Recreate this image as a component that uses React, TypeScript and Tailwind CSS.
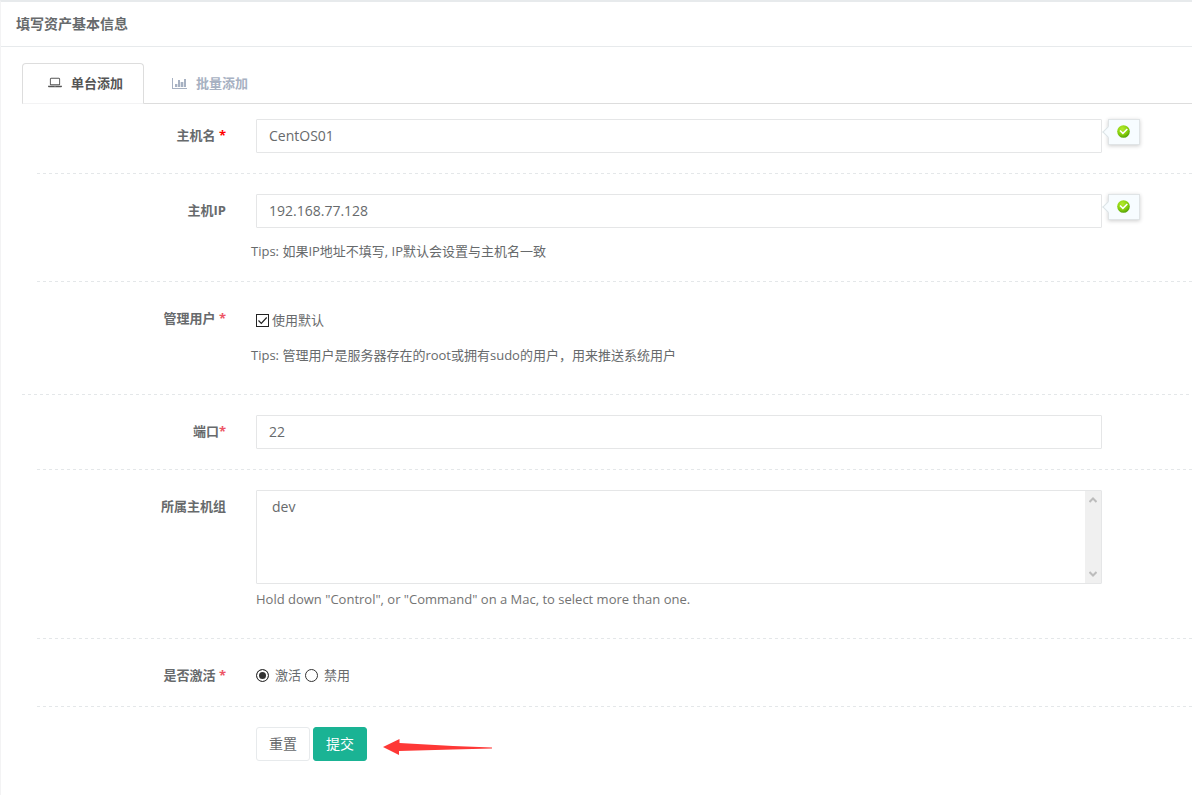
import { useState } from 'react';
import type { FormEvent, ReactNode } from 'react';
import clsx from 'clsx';

// ── Icons ────────────────────────────────────────────────────────────────────

function LaptopIcon() {
    return (
        <svg viewBox="0 0 1920 1792" className="h-[13px] w-[14px]" fill="currentColor" aria-hidden="true">
            <path d="M416 1280q-66 0-113-47t-47-113V416q0-66 47-113t113-47h1088q66 0 113 47t47 113v704q0 66-47 113t-113 47H416zm-32-864v704q0 13 9.500 22.500t22.500 9.500h1088q13 0 22.500-9.500t9.500-22.500V416q0-13-9.500-22.500T1504 384H416q-13 0-22.500 9.500T384 416zm1376 928h160v96q0 40-47 68t-113 28H160q-66 0-113-28t-47-68v-96h1760zm-720 96q16 0 16-16t-16-16H880q-16 0-16 16t16 16h160z" />
        </svg>
    );
}

function BarChartIcon() {
    return (
        <svg viewBox="0 0 15 13" className="h-[13px] w-[15px]" fill="currentColor" aria-hidden="true">
            <path d="M0 1h1v10h14v1H0z" />
            <path d="M3 7h2v3H3zM6 3h2v7H6zM9 5h2v5H9zM12 2h2v8h-2z" />
            <path d="M5 7h1v3H5zM8 5h1v5H8zM11 5h1v5h-1z" opacity="0.35" />
        </svg>
    );
}

function OkIcon() {
    return (
        <svg viewBox="0 0 13 13" className="size-[13px]" aria-hidden="true">
            <defs>
                <radialGradient id="ok-fill" cx="0.4" cy="0.3" r="0.75">
                    <stop offset="0" stopColor="#b4ea2c" />
                    <stop offset="0.6" stopColor="#86cf0c" />
                    <stop offset="1" stopColor="#4c9a06" />
                </radialGradient>
            </defs>
            <circle cx="6.500" cy="6.500" r="6.300" fill="url(#ok-fill)" />
            <path d="M3 5.500 5.900 8.400 10.300 4" fill="none" stroke="#fff" strokeWidth="1.500" />
        </svg>
    );
}

function Arrow() {
    return (
        <svg viewBox="0 0 110 18" className="h-[18px] w-[110px]" aria-hidden="true">
            <path d="M0 9 16.500 1V5L70 8 109 9.500V10.500L70 11.500 16 13V17Z" fill="#fe3836" />
        </svg>
    );
}

// ── Form parts ───────────────────────────────────────────────────────────────

const CONTROL = 'block w-full rounded-[1px] border border-[#e5e6e7] bg-white px-3 text-sm text-[#676a6c] outline-none focus:border-[#1ab394]';
const TEXT_INPUT = clsx(CONTROL, 'h-[34px] pb-[2px]');

function Required({ strong = false }: { strong?: boolean }) {
    return <span className={strong ? 'text-[#ff0000]' : 'text-[#ed5565]'}>*</span>;
}

interface RowProps {
    label: ReactNode;
    htmlFor?: string;
    id?: string;
    children: ReactNode;
}

function Row({ label, htmlFor, id, children }: RowProps) {
    const labelClass = 'w-[204px] shrink-0 pt-[6px] text-right font-bold leading-5';
    return (
        <div className="flex gap-[30px] pr-[90px]">
            {htmlFor
                ? <label htmlFor={htmlFor} className={labelClass}>{label}</label>
                : <span id={id} className={labelClass}>{label}</span>}
            <div className="relative min-w-0 flex-1">{children}</div>
        </div>
    );
}

function Divider({ wide = false }: { wide?: boolean }) {
    return (
        <hr className={clsx(
            'my-5 h-px border-0 bg-[repeating-linear-gradient(90deg,#e4e7e9_0_3px,transparent_3px_6px)]',
            !wide && 'ml-[15px]',
        )} />
    );
}

function ValidMark() {
    return (
        <span className="absolute top-0 left-full ml-[6px] flex h-[26px] w-8 justify-center border border-[#e0e4e6] bg-[#f7fcff] pt-[5px] pr-[2px] shadow-[0_1px_4px_rgba(0,0,0,0.2)]">
            <span className="absolute top-2 -left-[5px] size-2 rotate-45 border-b border-l border-[#dce3e6] bg-[#f7fcff]" />
            <OkIcon />
        </span>
    );
}

function GroupSelect() {
    return (
        <div className="relative">
            <select id="groups" multiple size={4} className={clsx(CONTROL, 'h-[94px] overflow-hidden py-[6px]')}>
                <option value="dev" className="px-[3px] py-0 leading-5">dev</option>
            </select>
            <span className="absolute inset-y-px right-px flex w-4 flex-col items-center justify-between bg-[#f0f0f0] py-[6px] pr-px text-[#bcbcbc]">
                <svg viewBox="0 0 8 6" className="h-[6px] w-2" aria-hidden="true">
                    <path d="M0.500 5 4 1.500 7.500 5" fill="none" stroke="currentColor" strokeWidth="2" />
                </svg>
                <svg viewBox="0 0 8 6" className="h-[6px] w-2" aria-hidden="true">
                    <path d="M0.500 1 4 4.500 7.500 1" fill="none" stroke="currentColor" strokeWidth="2" />
                </svg>
            </span>
        </div>
    );
}

interface RadioProps {
    label: string;
    checked: boolean;
    onChange: () => void;
}

function Radio({ label, checked, onChange }: RadioProps) {
    return (
        <label className="flex items-center gap-[6px]">
            <input
                type="radio" name="active" checked={checked} onChange={onChange}
                className="mt-px size-[13px] appearance-none rounded-full border border-[#333] bg-white checked:bg-[#333] checked:shadow-[inset_0_0_0_2px_#fff]"
            />
            {label}
        </label>
    );
}

// ── Page ─────────────────────────────────────────────────────────────────────

export default function App() {
    const [hostname, setHostname] = useState('CentOS01');
    const [ip, setIp] = useState('192.168.77.128');
    const [port, setPort] = useState('22');
    const [useDefault, setUseDefault] = useState(true);
    const [active, setActive] = useState(true);

    function handleSubmit(e: FormEvent) {
        e.preventDefault();
    }

    function handleReset() {
        setHostname('');
        setIp('');
        setPort('22');
        setUseDefault(true);
        setActive(true);
    }

    return (
        <main className="min-h-screen border-t-2 border-l border-t-[#e7eaec] border-l-[#f3f3f4] bg-white font-['Open_Sans','Noto_Sans_CJK_SC',sans-serif] text-[13px] leading-5 text-[#676a6c]">
            <header className="border-b border-[#e7eaec] px-[15px] py-3">
                <h1 className="text-sm leading-5 font-semibold">填写资产基本信息</h1>
            </header>

            <div className="pt-4 pb-8 pl-[21px]">
                <nav className="flex border-b border-[#ddd] font-semibold" role="tablist">
                    <button type="button" role="tab" aria-selected="true"
                        className="-mb-px flex h-[41px] items-center gap-[9px] rounded-t border border-[#ddd] border-b-[#f3f3f4] bg-white pr-5 pb-[2px] pl-[25px] text-[#555]">
                        <LaptopIcon />
                        单台添加
                    </button>
                    <button type="button" role="tab" aria-selected="false"
                        className="flex h-10 items-center gap-[9px] px-7 text-[#a7b1c2]">
                        <BarChartIcon />
                        批量添加
                    </button>
                </nav>

                <form className="pt-[15px]" onSubmit={handleSubmit}>
                    <Row htmlFor="hostname" label={<>主机名 <Required strong /></>}>
                        <input id="hostname" type="text" className={TEXT_INPUT}
                            value={hostname} onChange={e => setHostname(e.target.value)} />
                        {hostname && <ValidMark />}
                    </Row>
                    <Divider />

                    <Row htmlFor="ip" label="主机IP">
                        <input id="ip" type="text" className={TEXT_INPUT}
                            value={ip} onChange={e => setIp(e.target.value)} />
                        {ip && <ValidMark />}
                        <p className="-ml-[5px] pt-[13px]">Tips: 如果IP地址不填写, IP默认会设置与主机名一致</p>
                    </Row>
                    <Divider />

                    <Row id="admin-label" label={<>管理用户 <Required /></>}>
                        <label className="flex items-center gap-[3px] pt-2">
                            <input type="checkbox" checked={useDefault} aria-describedby="admin-label"
                                onChange={e => setUseDefault(e.target.checked)}
                                className="peer size-[13px] appearance-none border border-[#222] bg-white" />
                            <svg viewBox="0 0 13 13" className="-ml-4 hidden size-[13px] peer-checked:block" aria-hidden="true">
                                <path d="M2.500 6.500 5.300 9.300 10.700 3.500" fill="none" stroke="#222" strokeWidth="1.200" />
                            </svg>
                            使用默认
                        </label>
                        <p className="-ml-[5px] pt-[15px] pb-[9px]">Tips: 管理用户是服务器存在的root或拥有sudo的用户，用来推送系统用户</p>
                    </Row>
                    <Divider wide />

                    <Row htmlFor="port" label={<>端口<Required /></>}>
                        <input id="port" type="text" className={TEXT_INPUT}
                            value={port} onChange={e => setPort(e.target.value)} />
                    </Row>
                    <Divider />

                    <Row htmlFor="groups" label="所属主机组">
                        <GroupSelect />
                        <p className="pt-[5px] pb-[9px] text-[#737373]">Hold down "Control", or "Command" on a Mac, to select more than one.</p>
                    </Row>
                    <Divider />

                    <Row id="active-label" label={<>是否激活 <Required /></>}>
                        <div role="radiogroup" aria-labelledby="active-label" className="flex gap-1 pt-[6px] pb-px">
                            <Radio label="激活" checked={active} onChange={() => setActive(true)} />
                            <Radio label="禁用" checked={!active} onChange={() => setActive(false)} />
                        </div>
                    </Row>
                    <Divider />

                    <div className="flex gap-[3px] pl-[234px] text-sm">
                        <button type="button" onClick={handleReset}
                            className="h-[34px] rounded-[3px] border border-[#e7eaec] bg-white px-3">
                            重置
                        </button>
                        <button type="submit" className="h-[34px] rounded-[3px] border border-[#1ab394] bg-[#1ab394] px-3 text-white">
                            提交
                        </button>
                        <span className="ml-[13px] flex items-end pb-[5px]"><Arrow /></span>
                    </div>
                </form>
            </div>
        </main>
    );
}
